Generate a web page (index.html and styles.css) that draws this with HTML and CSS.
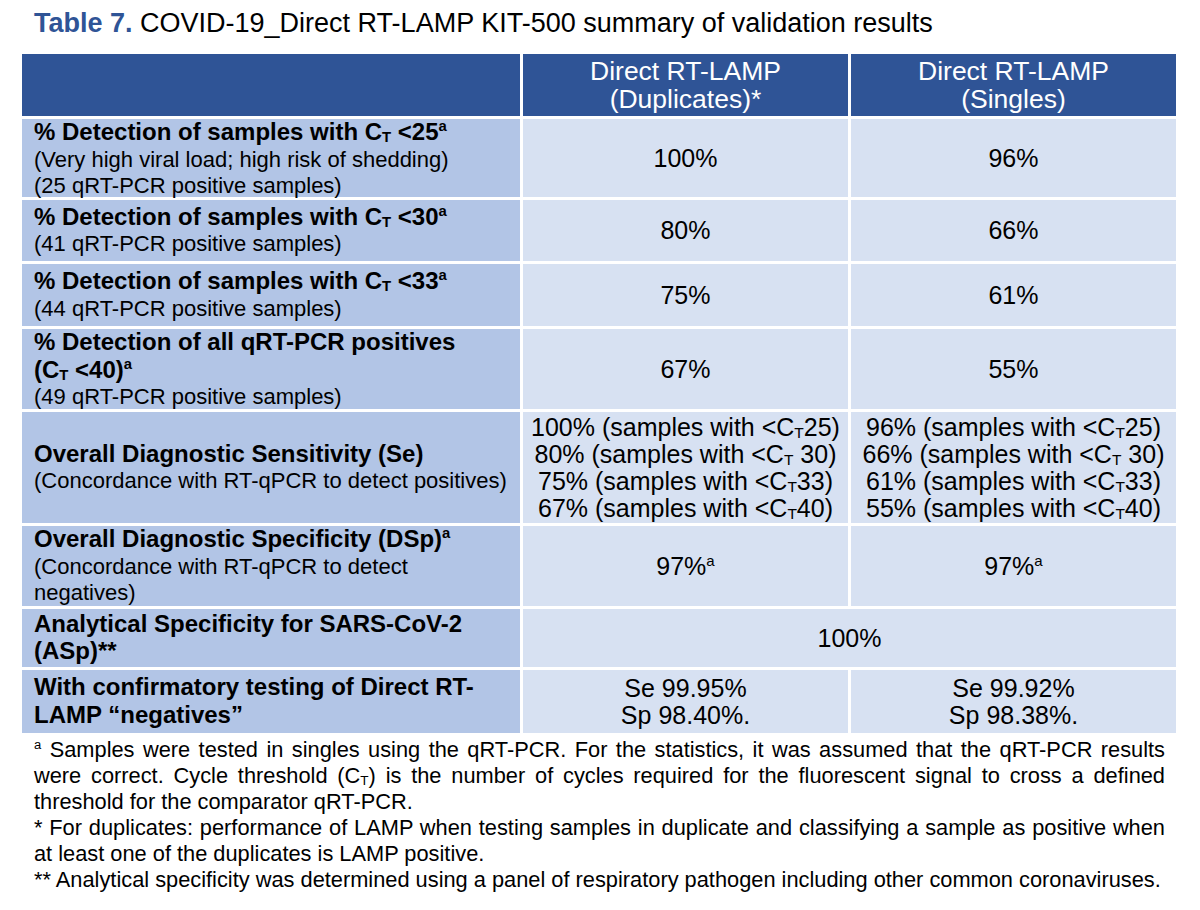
FILE: index.html
```html
<!DOCTYPE html>
<html lang="en">
<head>
<meta charset="utf-8">
<title>Table 7</title>
<link rel="stylesheet" href="styles.css">
</head>
<body>
<h1 class="title"><span class="title-label">Table 7.</span> COVID-19_Direct RT-LAMP KIT-500 summary of validation results</h1>
<div class="table">
  <div class="cell head"></div>
  <div class="cell head">Direct RT-LAMP<br>(Duplicates)*</div>
  <div class="cell head">Direct RT-LAMP<br>(Singles)</div>

  <div class="cell label"><b>% Detection of samples with C<sub>T</sub> &lt;25<sup>a</sup></b><br>(Very high viral load; high risk of shedding)<br>(25 qRT-PCR positive samples)</div>
  <div class="cell value">100%</div>
  <div class="cell value">96%</div>

  <div class="cell label"><b>% Detection of samples with C<sub>T</sub> &lt;30<sup>a</sup></b><br>(41 qRT-PCR positive samples)</div>
  <div class="cell value">80%</div>
  <div class="cell value">66%</div>

  <div class="cell label"><b>% Detection of samples with C<sub>T</sub> &lt;33<sup>a</sup></b><br>(44 qRT-PCR positive samples)</div>
  <div class="cell value">75%</div>
  <div class="cell value">61%</div>

  <div class="cell label"><b>% Detection of all qRT-PCR positives<br>(C<sub>T</sub> &lt;40)<sup>a</sup></b><br>(49 qRT-PCR positive samples)</div>
  <div class="cell value">67%</div>
  <div class="cell value">55%</div>

  <div class="cell label"><b>Overall Diagnostic Sensitivity (Se)</b><br>(Concordance with RT-qPCR to detect positives)</div>
  <div class="cell value">100% (samples with &lt;C<sub>T</sub>25)<br>80% (samples with &lt;C<sub>T</sub> 30)<br>75% (samples with &lt;C<sub>T</sub>33)<br>67% (samples with &lt;C<sub>T</sub>40)</div>
  <div class="cell value">96% (samples with &lt;C<sub>T</sub>25)<br>66% (samples with &lt;C<sub>T</sub> 30)<br>61% (samples with &lt;C<sub>T</sub>33)<br>55% (samples with &lt;C<sub>T</sub>40)</div>

  <div class="cell label"><b>Overall Diagnostic Specificity (DSp)<sup>a</sup></b><br>(Concordance with RT-qPCR to detect<br>negatives)</div>
  <div class="cell value">97%<sup>a</sup></div>
  <div class="cell value">97%<sup>a</sup></div>

  <div class="cell label"><b>Analytical Specificity for SARS-CoV-2<br>(ASp)**</b></div>
  <div class="cell value span2">100%</div>

  <div class="cell label"><b>With confirmatory testing of Direct RT-<br>LAMP “negatives”</b></div>
  <div class="cell value">Se 99.95%<br>Sp 98.40%.</div>
  <div class="cell value">Se 99.92%<br>Sp 98.38%.</div>
</div>
<div class="notes">
  <p class="note"><sup>a</sup> Samples were tested in singles using the qRT-PCR. For the statistics, it was assumed that the qRT-PCR results were correct. Cycle threshold (C<sub>T</sub>) is the number of cycles required for the fluorescent signal to cross a defined threshold for the comparator qRT-PCR.</p>
  <p class="note">* For duplicates: performance of LAMP when testing samples in duplicate and classifying a sample as positive when at least one of the duplicates is LAMP positive.</p>
  <p class="note">** Analytical specificity was determined using a panel of respiratory pathogen including other common coronaviruses.</p>
</div>
</body>
</html>
```

FILE: styles.css
```css
html, body {
  margin: 0;
  padding: 0;
  background: #ffffff;
}

body {
  font-family: "Liberation Sans", Arial, sans-serif;
  color: #000000;
}

.title {
  margin: 8px 0 16px 34px;
  font-size: 27px;
  line-height: 30px;
  font-weight: normal;
  white-space: nowrap;
}

.title-label {
  color: #2f5496;
  font-weight: bold;
}

.table {
  margin-left: 22px;
  display: grid;
  grid-template-columns: 498px 325px 325px;
  grid-template-rows: 62px 78px 61px 62px 80px 111px 80px 58px 63px;
  gap: 3px;
  width: 1154px;
}

.cell {
  display: block;
  align-content: center;
}

.head {
  background: #2f5496;
  color: #ffffff;
  font-size: 26.5px;
  line-height: 28px;
  text-align: center;
}

.label {
  background: #b2c5e6;
  padding: 0 6px 0 12px;
  font-size: 22px;
  line-height: 26.5px;
}

.label b {
  font-size: 24px;
}

.value {
  background: #d7e1f2;
  font-size: 25px;
  line-height: 27px;
  text-align: center;
}

.span2 {
  grid-column: span 2;
}

sub {
  font-size: 0.62em;
  vertical-align: -0.12em;
  line-height: 0;
}

sup {
  font-size: 0.6em;
  vertical-align: 0.62em;
  line-height: 0;
}

.label b sup {
  font-size: 0.62em;
}

.notes {
  margin: 4px 0 0 34px;
  width: 1131px;
  font-size: 21.8px;
  line-height: 26px;
}

.note {
  margin: 0;
  text-align: justify;
}
```
